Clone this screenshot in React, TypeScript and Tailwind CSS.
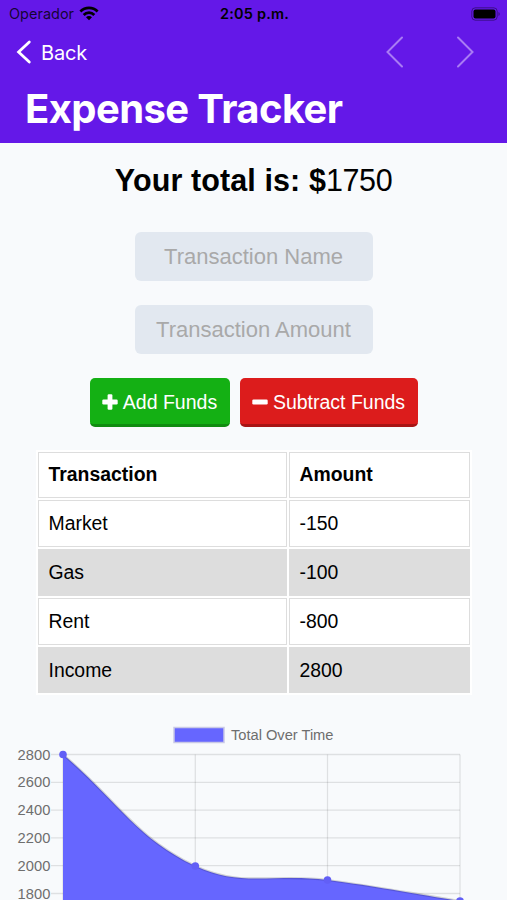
import React from 'react';

interface Transaction {
  name: string;
  amount: number;
}

const transactions: Transaction[] = [
  { name: 'Market', amount: -150 },
  { name: 'Gas', amount: -100 },
  { name: 'Rent', amount: -800 },
  { name: 'Income', amount: 2800 },
];

const ticks = [2800, 2600, 2400, 2200, 2000, 1800];

// chart points, relative to the chart svg
const points = [
  { x: 63, y: 34.5 },
  { x: 195.3, y: 146 },
  { x: 327.5, y: 160 },
  { x: 460, y: 181 },
];

const CURVE = 'M63 34.5 C115.9 79 135.5 117.7 195.3 146 C241.3 167.8 274.8 153 327.5 160 C380.6 167 407 172.6 460 181';

function StatusBar() {
  return (
    <div className="grid h-7 grid-cols-3 items-center pl-[9px] pr-[6px] font-['Inter',sans-serif] text-black">
      <div className="flex items-center gap-[5px]">
        <span className="text-[14.5px] text-black/80">Operador</span>
        <svg className="-mt-[2px]" width="20" height="15" viewBox="0 0 20 15" fill="none" stroke="currentColor" strokeWidth="2.8">
          <path d="M1.4 5.5a12.2 12.2 0 0 1 17.2 0" />
          <path d="M4.7 8.9a7.5 7.5 0 0 1 10.6 0" />
          <path d="M10 14.2 7 11.2a4.2 4.2 0 0 1 6 0Z" fill="currentColor" stroke="none" />
        </svg>
      </div>
      <span className="-ml-px text-center text-[14.5px] font-semibold tracking-[0.2px]">2:05 p.m.</span>
      <svg className="-mt-px justify-self-end" width="30" height="14" viewBox="0 0 30 14">
        <rect x="0.8" y="0.8" width="25.4" height="12.4" rx="3.5" fill="none" stroke="#000" strokeOpacity="0.4" />
        <rect x="2.5" y="2.5" width="22" height="9" rx="2" />
        <path d="M27.5 5v4c1.6-.7 1.6-3.3 0-4Z" fillOpacity="0.45" />
      </svg>
    </div>
  );
}

function Header() {
  return (
    <header className="h-[142.5px] flex-shrink-0 bg-[#6418e8] font-['Inter',sans-serif] text-white">
      <StatusBar />
      <div className="flex h-12 items-center justify-between pl-4 pr-8">
        <button className="flex items-center gap-[9px] text-[20px] tracking-[-0.2px]">
          <svg width="16" height="24" viewBox="0 0 16 24" fill="none" stroke="currentColor" strokeWidth="2.8" strokeLinecap="round">
            <path d="M13.3 2 2.6 12l10.7 10" />
          </svg>
          <span className="pt-px">Back</span>
        </button>
        <div className="flex gap-[52px] text-[#a97bf4]">
          <svg width="19" height="32" viewBox="0 0 19 32" fill="none" stroke="currentColor" strokeWidth="2" strokeLinecap="round">
            <path d="M17 1.5 2.5 16 17 30.5" />
          </svg>
          <svg width="19" height="32" viewBox="0 0 19 32" fill="none" stroke="currentColor" strokeWidth="2" strokeLinecap="round">
            <path d="M2 1.5 16.5 16 2 30.5" />
          </svg>
        </div>
      </div>
      <h1 className="pl-[25px] pt-[8px] text-[40px] font-bold leading-[50px] tracking-[-0.6px]">Expense Tracker</h1>
    </header>
  );
}

function PlusIcon() {
  return (
    <svg width="16" height="16" viewBox="0 0 16 16" fill="currentColor">
      <rect x="0.3" y="5.6" width="15.4" height="4.8" rx="1.2" />
      <rect x="5.6" y="0.3" width="4.8" height="15.4" rx="1.2" />
    </svg>
  );
}

function MinusIcon() {
  return (
    <svg width="16" height="16" viewBox="0 0 16 16" fill="currentColor">
      <rect x="0.3" y="5.6" width="15.4" height="4.8" rx="1.2" />
    </svg>
  );
}

function TransactionTable() {
  return (
    <table className="mx-auto mt-[22.5px] w-[436px] table-fixed border-separate border-spacing-[2.5px] bg-white text-[19.4px]">
      <colgroup>
        <col className="w-[249px]" />
        <col />
      </colgroup>
      <thead>
        <tr className="h-[46.8px] text-left">
          <th className="border border-[#dddddd] px-[10px] py-0">Transaction</th>
          <th className="border border-[#dddddd] px-[10px] py-0">Amount</th>
        </tr>
      </thead>
      <tbody>
        {transactions.map((t) => (
          <tr key={t.name} className="h-[46.8px] even:bg-[#dddddd]">
            <td className="border border-[#dddddd] px-[10px] py-0">{t.name}</td>
            <td className="border border-[#dddddd] px-[10px] py-0">{t.amount}</td>
          </tr>
        ))}
      </tbody>
    </table>
  );
}

function TotalChart() {
  return (
    <svg className="mt-[24.5px] block flex-shrink-0" width="507" height="200" viewBox="0 0 507 200" fontSize="14.7" fill="#6e6e6e">
      <rect x="174" y="7.5" width="50" height="15" fill="#6666ff" stroke="#c9c9e6" strokeWidth="1.5" />
      <text x="231" y="20" textLength="102.5">Total Over Time</text>

      <g stroke="#000" strokeOpacity="0.1" strokeWidth="1.3">
        {ticks.map((t, i) => (
          <line key={t} x1="51" x2="460" y1={34.5 + i * 27.8} y2={34.5 + i * 27.8} />
        ))}
        {points.map((p) => (
          <line key={p.x} x1={p.x} x2={p.x} y1="34.5" y2="200" />
        ))}
      </g>
      {ticks.map((t, i) => (
        <text key={t} x="17.5" y={39.5 + i * 27.8} textLength="33">
          {t}
        </text>
      ))}

      <path d={`${CURVE} V200 H63 Z`} fill="#6666ff" />
      <path d={CURVE} fill="none" stroke="#000" strokeOpacity="0.16" strokeWidth="2.2" />
      {points.map((p) => (
        <circle key={p.x} cx={p.x} cy={p.y} r="3.8" fill="#625ff6" />
      ))}
    </svg>
  );
}

export default function App() {
  return (
    <div className="flex h-[900px] w-[507px] flex-col overflow-hidden bg-[#f8fafc] font-['Liberation_Sans',Arial,sans-serif] text-black">
      <Header />
      <h2 className="mt-[17px] h-[40px] text-center text-[30.5px] leading-[40px]">
        <b className="tracking-[0.1px]">Your total is: $</b>
        <span className="tracking-[-0.4px]">1750</span>
      </h2>
      <div className="mt-[32.5px] flex flex-col items-center gap-[24px]">
        <input
          className="h-[49px] w-[238px] rounded-md bg-[#e2e8f0] text-center text-[22px] placeholder:text-[#a9a9a9]"
          placeholder="Transaction Name"
        />
        <input
          className="h-[49px] w-[238px] rounded-md bg-[#e2e8f0] text-center text-[22px] placeholder:text-[#a9a9a9]"
          placeholder="Transaction Amount"
        />
      </div>
      <div className="mt-[24px] flex justify-center gap-[10px] text-[19.5px] text-white">
        <button className="flex h-[49px] w-[140px] items-center justify-center gap-[5px] rounded-[5px] border-b-[3px] border-[#108c10] bg-[#14b014] pt-[3px]">
          <span className="-mt-[2px]"><PlusIcon /></span>
          Add Funds
        </button>
        <button className="flex h-[49px] w-[178px] items-center justify-center gap-[5px] rounded-[5px] border-b-[3px] border-[#a81414] bg-[#dc1c1c] pt-[3px]">
          <span className="-mt-[2px]"><MinusIcon /></span>
          Subtract Funds
        </button>
      </div>
      <TransactionTable />
      <TotalChart />
    </div>
  );
}
